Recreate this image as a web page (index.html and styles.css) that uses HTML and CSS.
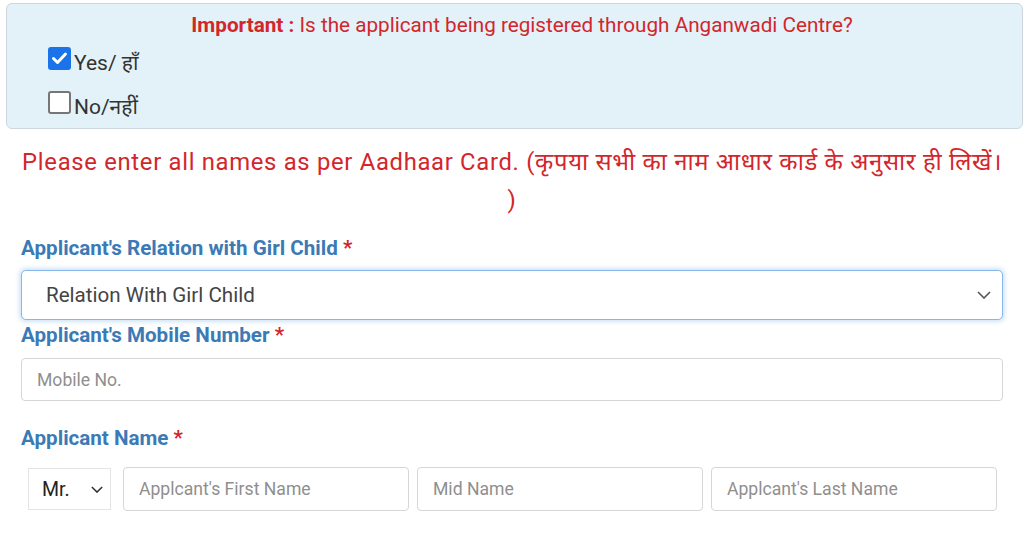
FILE: index.html
```html
<!DOCTYPE html>
<html lang="en">
<head>
<meta charset="utf-8">
<link rel="stylesheet" href="styles.css">
</head>
<body>
<div class="notice">
  <p class="notice-title"><b>Important :</b> Is the applicant being registered through Anganwadi Centre?</p>
  <div class="opt">
    <span class="cb cb-on"><svg viewBox="0 0 23 23" width="23" height="23"><path d="M5.5 11.5l4 4 8-8.5" fill="none" stroke="#fff" stroke-width="3" stroke-linecap="round" stroke-linejoin="round"/></svg></span>
    <span class="opt-text">Yes/ हाँ</span>
  </div>
  <div class="opt">
    <span class="cb"></span>
    <span class="opt-text">No/नहीं</span>
  </div>
</div>

<p class="warn">Please enter all names as per Aadhaar Card. (कृपया सभी का नाम आधार कार्ड के अनुसार ही लिखें।<br>)</p>

<div class="form">
  <label class="lbl">Applicant's Relation with Girl Child <span class="req">*</span></label>
  <div class="select select-focus">
    <span>Relation With Girl Child</span>
    <svg class="chev" viewBox="0 0 14 8" width="14" height="8"><path d="M1 1l6 6 6-6" fill="none" stroke="#555" stroke-width="1.6"/></svg>
  </div>

  <label class="lbl lbl-mobile">Applicant's Mobile Number <span class="req">*</span></label>
  <div class="input input-wide"><span class="ph">Mobile No.</span></div>

  <label class="lbl lbl-name">Applicant Name <span class="req">*</span></label>
  <div class="name-row">
    <div class="title-select">
      <span>Mr.</span>
      <svg class="chev" viewBox="0 0 14 8" width="12" height="7"><path d="M1 1l6 6 6-6" fill="none" stroke="#333" stroke-width="1.8"/></svg>
    </div>
    <div class="input name-input"><span class="ph">Applcant's First Name</span></div>
    <div class="input name-input"><span class="ph">Mid Name</span></div>
    <div class="input name-input"><span class="ph">Applcant's Last Name</span></div>
  </div>
</div>
</body>
</html>
```

FILE: styles.css
```css
* { box-sizing: border-box; }
html, body { margin: 0; padding: 0; background: #fff; }
body {
  font-family: Roboto, "Noto Sans", "Liberation Sans", sans-serif;
  color: #333;
  width: 1024px;
  height: 533px;
  overflow: hidden;
}

.notice {
  margin: 3px 1px 0 6px;
  height: 126px;
  background: #e2f2f8;
  border: 1px solid #cdd6da;
  border-radius: 6px;
  padding: 9px 0 0 41px;
}
.notice-title {
  margin: 0 0 0 -26px;
  text-align: center;
  font-size: 20.7px;
  line-height: 24px;
  color: #d3262b;
}
.notice-title b { font-weight: 700; }

.opt {
  display: flex;
  align-items: center;
  height: 23px;
  margin-top: 10px;
}
.opt + .opt { margin-top: 21px; }
.cb {
  width: 23px;
  height: 23px;
  border-radius: 3px;
  border: 2px solid #767676;
  background: #fff;
  flex: none;
  display: flex;
}
.cb-on {
  border: none;
  background: #1a73e8;
}
.opt-text {
  font-size: 21px;
  color: #333;
  margin-left: 3px;
  position: relative;
  top: 3px;
}

.warn {
  margin: 14px 4px 0 4px;
  text-align: center;
  white-space: nowrap;
  font-size: 23.8px;
  line-height: 38px;
  letter-spacing: 0.7px;
  color: #d3262b;
}

.form {
  padding: 0 21px;
  margin-top: 17px;
}
.lbl {
  display: block;
  font-size: 20.6px;
  font-weight: 700;
  color: #3b7ab5;
  line-height: 24px;
}
.req { color: #d3262b; }

.select {
  margin-top: 10px;
  height: 50px;
  border: 1px solid #86b7e8;
  border-radius: 5px;
  background: #fff;
  box-shadow: 0 0 4px 2px rgba(120, 175, 230, 0.35);
  display: flex;
  align-items: center;
  justify-content: space-between;
  padding: 0 11px 0 24px;
  font-size: 20.6px;
  color: #444;
}

.lbl-mobile { margin-top: 3px; }
.input {
  background: #fff;
  border: 1px solid #d6d6d6;
  border-radius: 4px;
  display: flex;
  align-items: center;
}
.input-wide {
  margin-top: 11px;
  height: 43px;
  padding-left: 15px;
}
.ph { color: #8f8f8f; font-size: 17.6px; }

.lbl-name { margin-top: 25px; }

.name-row {
  display: flex;
  align-items: center;
  gap: 8px;
  margin-top: 17px;
  padding: 0 6px 0 7px;
}
.title-select {
  width: 83px;
  height: 42px;
  border: 1px solid #e4e4e4;
  background: #fff;
  display: flex;
  align-items: center;
  justify-content: space-between;
  padding: 0 7px 0 13px;
  font-size: 19.5px;
  color: #222;
  margin-right: 4px;
}
.name-input {
  flex: 1;
  height: 44px;
  padding-left: 15px;
}
.name-input .ph { font-size: 17.6px; }
```
